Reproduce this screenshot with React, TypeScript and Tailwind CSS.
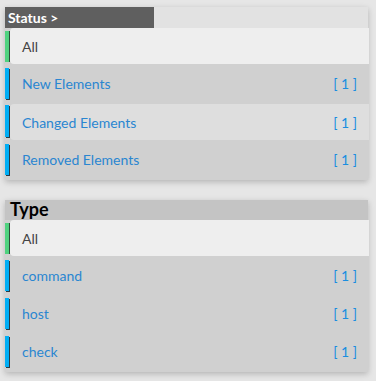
import React from "react";

type Item = { label: string; count: number; hover?: boolean };

function AllRow() {
  return (
    <div className="relative h-[36px] mr-[-1px]">
      <div className="absolute left-0 top-[3px] w-[4px] h-[31px] bg-[#4fd27f] shadow-[1px_0_0_#2f4a3a]" />
      <div className="ml-[5px] h-full bg-[#eeeeee] rounded-l-[4px] flex items-center pl-[12px] text-[14px] text-[#444444]">
        All
      </div>
    </div>
  );
}

function ItemRow({ item }: { item: Item }) {
  if (item.hover) {
    return (
      <div className="relative h-[38px] pt-[2px] mr-[-1px]">
        <div className="absolute left-0 top-[3px] w-[4px] h-[32px] bg-[#00aef5] shadow-[1px_1px_0_#2a3a44]" />
        <div className="ml-[5px] h-[36px] bg-[#dedede] rounded-l-[4px] flex items-center pl-[12px] pr-[12px] text-[14px] text-[#2a86d1]">
          <span className="flex-1">{item.label}</span>
          <span className="text-[#1a8ee0]">[ {item.count} ]</span>
        </div>
      </div>
    );
  }
  return (
    <div className="relative h-[38px] bg-[#d0d0d0] flex items-center pl-[17px] pr-[11px] text-[14px] text-[#2a86d1]">
      <div className="absolute left-0 top-[4px] w-[4px] h-[31px] bg-[#00aef5] shadow-[1px_1px_0_#2a3a44]" />
      <span className="flex-1">{item.label}</span>
      <span className="text-[#1a8ee0]">[ {item.count} ]</span>
    </div>
  );
}

export default function App() {
  const status: Item[] = [
    { label: "New Elements", count: 1 },
    { label: "Changed Elements", count: 1, hover: true },
    { label: "Removed Elements", count: 1 },
  ];
  const types: Item[] = [
    { label: "command", count: 1 },
    { label: "host", count: 1 },
    { label: "check", count: 1 },
  ];
  return (
    <div
      className="w-[376px] h-[381px] bg-[#e6e6e6] pl-[5px] pt-[7px] overflow-hidden"
      style={{ fontFamily: "Lato, 'Noto Sans', sans-serif" }}
    >
      <div className="w-[363px] bg-[#d0d0d0] pb-[2px] shadow-[0_2px_6px_rgba(0,0,0,0.22)]">
        <div className="h-[21px] bg-[#e2e2e2] flex">
          <div className="w-[149px] h-full bg-[#5f5f5f] text-white font-bold text-[14px] leading-[21px] pl-[3px]">
            Status &gt;
          </div>
        </div>
        <AllRow />
        {status.map((s) => (
          <ItemRow key={s.label} item={s} />
        ))}
      </div>

      <div className="w-[363px] mt-[20px] bg-[#d0d0d0] pb-[2px] shadow-[0_2px_6px_rgba(0,0,0,0.22)]">
        <div className="h-[20px] bg-[#c4c4c4] text-black font-bold text-[18px] leading-[18px] pl-[5px]">
          Type
        </div>
        <AllRow />
        {types.map((s) => (
          <ItemRow key={s.label} item={s} />
        ))}
      </div>
    </div>
  );
}
